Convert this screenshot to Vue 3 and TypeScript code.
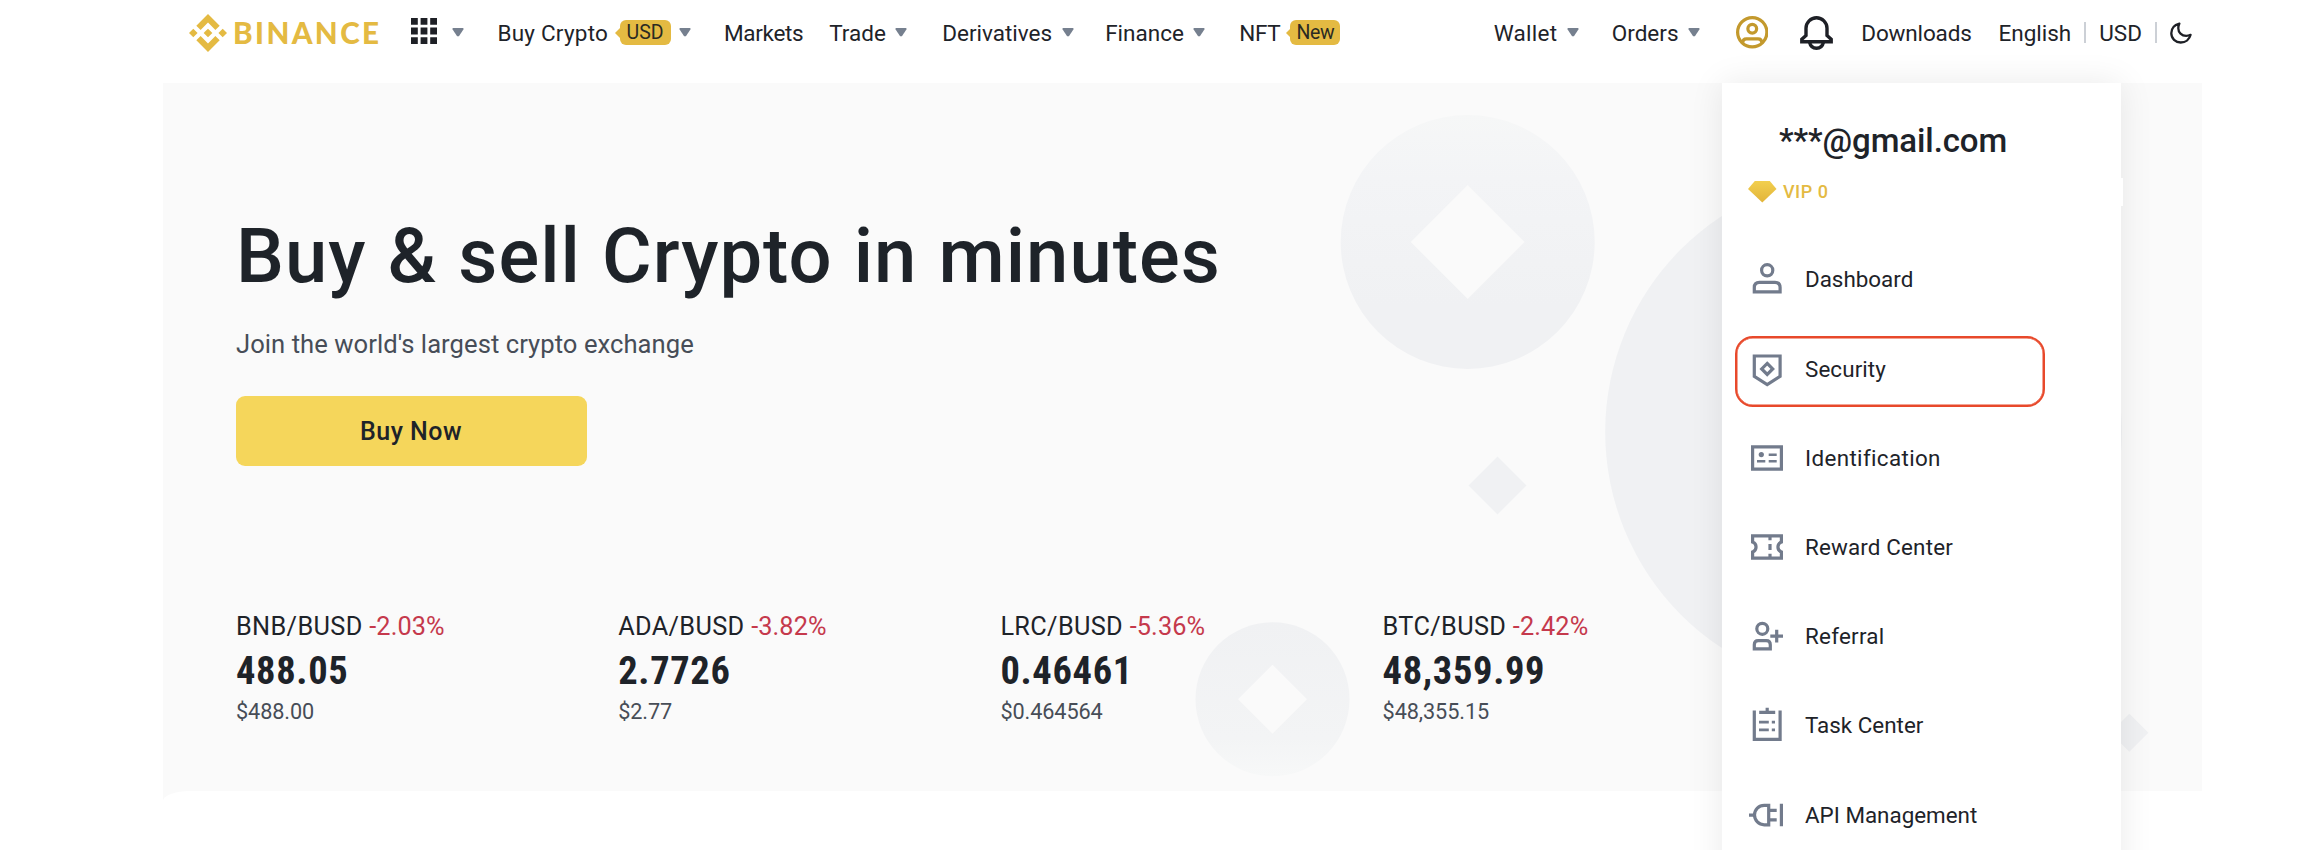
<script setup lang="ts">
interface NavItem {
  label: string
  slot: string
  tracking?: number
  badge?: string
  caret?: boolean
}

interface Ticker {
  pair: string
  change: string
  price: string
  usd: string
}

interface MenuItem {
  label: string
  icon: string
  tracking: number
  highlighted?: boolean
}

const mainNav: NavItem[] = [
  { label: 'Buy Crypto', slot: 'buy', tracking: 0.23, badge: 'USD', caret: true },
  { label: 'Markets', slot: 'markets', tracking: -0.3 },
  { label: 'Trade', slot: 'trade', tracking: 0, caret: true },
  { label: 'Derivatives', slot: 'derivatives', tracking: 0, caret: true },
  { label: 'Finance', slot: 'finance', tracking: 0, caret: true },
  { label: 'NFT', slot: 'nft', tracking: -0.3, badge: 'New' },
]

const accountNav: NavItem[] = [
  { label: 'Wallet', slot: 'wallet', tracking: 0.25, caret: true },
  { label: 'Orders', slot: 'orders', tracking: 0, caret: true },
]

const tickers: Ticker[] = [
  { pair: 'BNB/BUSD', change: '-2.03%', price: '488.05', usd: '$488.00' },
  { pair: 'ADA/BUSD', change: '-3.82%', price: '2.7726', usd: '$2.77' },
  { pair: 'LRC/BUSD', change: '-5.36%', price: '0.46461', usd: '$0.464564' },
  { pair: 'BTC/BUSD', change: '-2.42%', price: '48,359.99', usd: '$48,355.15' },
]

const menu: MenuItem[] = [
  { label: 'Dashboard', icon: 'user', tracking: 0 },
  { label: 'Security', icon: 'shield', tracking: 0.1, highlighted: true },
  { label: 'Identification', icon: 'id', tracking: 0.36 },
  { label: 'Reward Center', icon: 'ticket', tracking: 0.16 },
  { label: 'Referral', icon: 'referral', tracking: 0.25 },
  { label: 'Task Center', icon: 'task', tracking: 0 },
  { label: 'API Management', icon: 'api', tracking: 0 },
]
</script>

<template>
  <div class="page">
    <header class="header">
      <a class="logo">
        <svg class="logo-mark" viewBox="0 0 126.61 126.61">
          <path d="M38.73 53.2 63.31 28.62 87.9 53.21 102.2 38.91 63.31 0 24.43 38.9zM0 63.31 14.3 49.01 28.6 63.31 14.3 77.61zM38.73 73.41 63.31 98 87.9 73.4 102.21 87.69 63.31 126.61 24.43 87.73zM98.01 63.31 112.31 49.01 126.61 63.31 112.31 77.61zM77.83 63.3 63.31 48.78 52.58 59.51 51.34 60.74 48.79 63.29 63.31 77.82z" />
        </svg>
        <span class="logo-text">BINANCE</span>
      </a>
      <div class="apps">
        <svg class="apps-grid" viewBox="0 0 26 26">
          <path d="M0 0h6.8v6.8H0zM9.6 0h6.8v6.8H9.6zM19.2 0H26v6.8h-6.8zM0 9.6h6.8v6.8H0zM9.6 9.6h6.8v6.8H9.6zM19.2 9.6H26v6.8h-6.8zM0 19.2h6.8V26H0zM9.6 19.2h6.8V26H9.6zM19.2 19.2H26V26h-6.8z" />
        </svg>
        <svg class="caret" viewBox="0 0 12 9"><path d="M.6 0h10.8v1.6L6.9 8.2H5.1L.6 1.6z" /></svg>
      </div>
      <a v-for="item in mainNav" :key="item.label" class="nav-item" :class="item.slot">
        <span :style="{ letterSpacing: item.tracking + 'px' }">{{ item.label }}</span>
        <span v-if="item.badge" class="badge">{{ item.badge }}</span>
        <svg v-if="item.caret" class="caret" viewBox="0 0 12 9"><path d="M.6 0h10.8v1.6L6.9 8.2H5.1L.6 1.6z" /></svg>
      </a>
      <a v-for="item in accountNav" :key="item.label" class="nav-item" :class="item.slot">
        <span :style="{ letterSpacing: item.tracking + 'px' }">{{ item.label }}</span>
        <svg class="caret" viewBox="0 0 12 9"><path d="M.6 0h10.8v1.6L6.9 8.2H5.1L.6 1.6z" /></svg>
      </a>
      <div class="profile">
        <svg class="profile-icon" viewBox="0 0 32 32" fill="none" stroke="#c3992d" stroke-width="3.2">
          <circle cx="16" cy="16" r="14.4" />
          <circle cx="16" cy="12.6" r="4.3" />
          <path d="M6.6 26.4c0-2.6 1.4-4 3.7-4h11.4c2.3 0 3.7 1.4 3.7 4" />
        </svg>
      </div>
      <div class="alerts">
        <svg class="bell" viewBox="0 0 33 34" fill="none" stroke="#1e2026" stroke-width="3.4">
          <path d="M1.8 25.7v-2.4L6 19.4v-7.1a10.5 10.5 0 0 1 21 0v7.1l4.2 3.9v2.4z" />
          <path d="M9.6 26.4c.8 3.8 3.3 5.8 6.9 5.8s6.1-2 6.9-5.8" />
        </svg>
      </div>
      <a class="nav-item downloads">Downloads</a>
      <div class="locale">
        <span>English</span>
        <i class="divider"></i>
        <span>USD</span>
        <i class="divider"></i>
        <svg class="moon" viewBox="0 0 22 22" fill="none" stroke="#1e2026" stroke-width="2.3" stroke-linejoin="round">
          <path d="M9.4 1.6C4.5 2.9 1.3 6.6 1.3 11.3c0 5.2 4.2 9.2 9.4 9.2 5 0 8.8-3.2 9.9-7.7-1.5.7-2.9 1-4.4 1-4.6 0-7.9-3.3-7.9-7.6 0-1.6.4-3.2 1.1-4.6z" />
        </svg>
      </div>
    </header>

    <main class="hero">
      <svg class="backdrop" viewBox="0 0 2039 717">
        <defs>
          <linearGradient id="fade-up" x1="0" y1="0" x2="0" y2="1">
            <stop offset="0" stop-color="#f6f7f7" />
            <stop offset=".25" stop-color="#f3f4f6" />
            <stop offset=".75" stop-color="#f0f1f3" />
          </linearGradient>
          <linearGradient id="fade-down" x1="0" y1="0" x2="0" y2="1">
            <stop offset="0" stop-color="#f0f1f3" />
            <stop offset=".75" stop-color="#f3f4f5" />
            <stop offset="1" stop-color="#f7f8f8" />
          </linearGradient>
        </defs>
        <circle cx="1304.7" cy="159" r="127" fill="url(#fade-up)" />
        <path d="M1304.7 102l57 57-57 57-57-57z" fill="#fafafa" />
        <path d="M1334.5 373.5l29 29-29 29-29-29z" fill="#f0f1f3" />
        <circle cx="1700.5" cy="349" r="258.3" fill="#f0f1f3" />
        <circle cx="1109.5" cy="616.3" r="77" fill="url(#fade-down)" />
        <path d="M1109.5 581.8l34.5 34.5-34.5 34.5-34.5-34.5z" fill="#fafafa" />
        <path d="M1966.3 630.7l19 19-19 19-19-19z" fill="#f0f1f3" />
      </svg>
      <section class="intro">
        <h1>Buy &amp; sell Crypto in minutes</h1>
        <p>Join the world's largest crypto exchange</p>
        <button class="buy-now">Buy Now</button>
      </section>
      <section class="tickers">
        <article v-for="t in tickers" :key="t.pair" class="ticker">
          <div class="pair">{{ t.pair }} <span class="change">{{ t.change }}</span></div>
          <div class="price">{{ t.price }}</div>
          <div class="usd">{{ t.usd }}</div>
        </article>
      </section>
    </main>
    <section class="below"></section>

    <aside class="panel">
      <div class="email">***@gmail.com</div>
      <div class="vip">
        <svg class="gem" viewBox="0 0 29 22">
          <defs>
            <linearGradient id="gem-fill" x1="0" y1="0" x2="0" y2="1">
              <stop offset="0" stop-color="#f2cf4e" />
              <stop offset="1" stop-color="#e2b43a" />
            </linearGradient>
          </defs>
          <path d="M6.8 0h15l6.7 8L14.3 21.6 0 8z" fill="url(#gem-fill)" />
        </svg>
        <span>VIP 0</span>
      </div>
      <nav class="menu">
        <a v-for="item in menu" :key="item.label" class="menu-item" :class="{ highlighted: item.highlighted }">
          <svg class="menu-icon" viewBox="0 0 40 40" fill="none" stroke="#727b8c" stroke-width="3.2">
            <template v-if="item.icon === 'user'">
              <circle cx="20.2" cy="11.3" r="5.6" />
              <path d="M7.3 32.8v-4.4c0-3.2 1.9-5.1 5.1-5.1H28c3.2 0 5.1 1.9 5.1 5.1v4.4z" />
            </template>
            <template v-else-if="item.icon === 'shield'">
              <path d="M7.3 7h25.8v20.3l-12.9 8.2-12.9-8.2z" />
              <path d="M20.2 14.4l5.5 5.5-5.5 5.5-5.5-5.5z" />
            </template>
            <template v-else-if="item.icon === 'id'">
              <path d="M5.6 8.8h28.8v22.4H5.6z" />
              <circle cx="14.3" cy="16.6" r="2.6" fill="#727b8c" stroke="none" />
              <path d="M21.7 16.7h8M10 23.3h8.3M21.7 23.3h8" stroke-width="2.6" />
            </template>
            <template v-else-if="item.icon === 'ticket'">
              <path d="M5.6 8.9h28.8v6.2a5.2 5.2 0 0 0 0 9.8v6.2H5.6v-6.2a5.2 5.2 0 0 0 0-9.8z" />
              <path d="M23 9.5v3.8M23 17v6M23 26.7v3.8" />
            </template>
            <template v-else-if="item.icon === 'referral'">
              <circle cx="15.3" cy="12.8" r="5.5" />
              <path d="M7.3 32.9v-4.2c0-2.6 1.6-4 4-4h8c2.4 0 4 1.4 4 4v4.2zM23.3 20.1H36M29.7 13.8v12.7" />
            </template>
            <template v-else-if="item.icon === 'task'">
              <path d="M7.3 5.6v28.7h25.8V5.6" />
              <path d="M12.2 7.3h16M20.2 2.8V7" />
              <path d="M12 17.1h9.8M24.8 17.1H28M12 24.9h9.8M24.8 24.9H28" stroke-width="2.8" />
            </template>
            <template v-else>
              <path d="M21.7 10.4h-4.5a9.7 9.7 0 0 0 0 19.4h4.5z" />
              <path d="M2 20.1h5.5M23 15.4h6.7M23 24.8h6.7M34.4 8.8v22.4" />
            </template>
          </svg>
          <span :style="{ letterSpacing: item.tracking + 'px' }">{{ item.label }}</span>
        </a>
      </nav>
    </aside>
  </div>
</template>

<style scoped>
.page {
  position: relative;
  width: 2324px;
  height: 850px;
  overflow: hidden;
  background: #fff;
  color: #1e2329;
  font-family: Roboto, 'Noto Sans', sans-serif;
}

.header {
  display: grid;
  grid-template-columns: 222.4px 86px 226.5px 105.3px 113px 163px 134px 253.5px 119.1px 123.8px 64.2px 61.5px 137.2px auto;
  align-items: center;
  height: 65px;
  padding-left: 189px;
  margin-bottom: 18px;
  font-size: 22.5px;
  white-space: nowrap;
}

.logo {
  display: flex;
  align-items: center;
  color: #e4ba42;
}

.logo-mark {
  width: 38px;
  height: 38px;
  fill: currentColor;
}

.logo-text {
  margin-left: 6px;
  font-family: Lato, sans-serif;
  font-size: 29.6px;
  font-weight: 900;
  line-height: 38px;
  letter-spacing: 2.4px;
}

.apps {
  display: flex;
  align-items: center;
  gap: 15px;
}

.apps-grid {
  width: 26px;
  height: 26px;
  margin-top: -3px;
  fill: #1e2026;
}

.caret {
  flex: none;
  width: 12px;
  height: 9px;
  fill: #76808f;
}

.nav-item {
  display: flex;
  align-items: center;
  gap: 9.5px;
}

.badge {
  position: relative;
  height: 25px;
  margin-left: 2px;
  padding: 0 7px;
  border-radius: 6px;
  background: #e4ba42;
  color: #2b2a22;
  font-size: 19.5px;
  line-height: 25px;
}

.buy .badge {
  margin-right: -1px;
}

.nft .badge {
  margin-left: 0.5px;
  padding: 0 6px;
  letter-spacing: -0.3px;
}

.badge::before {
  content: '';
  position: absolute;
  top: 8px;
  left: -4.5px;
  border: solid transparent;
  border-width: 5px 5px 5px 0;
  border-right-color: #e4ba42;
}

.wallet {
  margin-left: 1px;
}

.profile,
.alerts {
  display: flex;
}

.profile-icon {
  width: 32.5px;
  height: 32.5px;
}

.bell {
  width: 33px;
  height: 34px;
}

.downloads {
  letter-spacing: -0.15px;
}

.locale {
  display: flex;
  align-items: center;
}

.divider {
  width: 2px;
  height: 21px;
  margin: 0 13px;
  background: #ccd0d6;
}

.moon {
  width: 22px;
  height: 22px;
}

.hero {
  position: relative;
  box-sizing: border-box;
  width: 2039px;
  height: 717px;
  margin-left: 163px;
  padding: 128px 0 0 73px;
  background: #fafafa;
}

.backdrop {
  position: absolute;
  inset: 0;
  width: 2039px;
  height: 717px;
}

.intro,
.tickers {
  position: relative;
}

h1 {
  margin: 0;
  font-size: 76px;
  font-weight: 500;
  line-height: 90px;
  letter-spacing: 1px;
  word-spacing: 1.2px;
}

.intro p {
  margin: 25px 0 34px;
  color: #474d57;
  font-size: 25.6px;
  line-height: 36px;
  letter-spacing: 0.05px;
}

.buy-now {
  display: block;
  width: 351px;
  height: 70px;
  padding: 1px 1px 0 0;
  border: 0;
  border-radius: 9px;
  background: #f5d65b;
  color: #1e2329;
  font: 500 25px/69px Roboto, sans-serif;
  letter-spacing: 0.5px;
}

.tickers {
  display: grid;
  grid-template-columns: repeat(4, 382.2px);
  margin-top: 143px;
}

.pair {
  font-size: 25.3px;
  line-height: 36px;
  letter-spacing: 0.35px;
}

.change {
  color: #c5394c;
  letter-spacing: 0.1px;
}

.price {
  margin-top: 4px;
  font-family: 'Roboto Condensed', Roboto, sans-serif;
  font-size: 38.5px;
  font-weight: 700;
  line-height: 44px;
  letter-spacing: 0.65px;
}

.usd {
  margin-top: 4px;
  color: #474d57;
  font-size: 21.7px;
  line-height: 30px;
  letter-spacing: -0.1px;
}

.below {
  position: relative;
  height: 60px;
  margin: -9.5px 0 0 163px;
  border-top-left-radius: 27px 10px;
  background: #fff;
}

.panel {
  position: absolute;
  top: 83px;
  left: 1722px;
  box-sizing: border-box;
  width: 399px;
  height: 820px;
  padding: 36px 0 0 25px;
  background: #fff;
  box-shadow: 0 0 32px rgba(20, 21, 26, 0.085);
}

.email {
  margin-left: 32px;
  font-size: 33px;
  font-weight: 500;
  line-height: 44px;
  letter-spacing: -0.1px;
}

.vip {
  display: flex;
  align-items: center;
  gap: 6px;
  width: 376px;
  height: 28px;
  margin-top: 14.5px;
  background: #fff;
  color: #e4ba42;
  font-size: 18px;
  font-weight: 500;
  letter-spacing: 0.5px;
}

.gem {
  width: 29px;
  height: 22px;
  margin-left: 1px;
}

.menu {
  margin-top: 29.3px;
}

.menu-item {
  position: relative;
  display: flex;
  align-items: center;
  gap: 18px;
  height: 89.2px;
  font-size: 22.4px;
}

.highlighted::after {
  content: '';
  position: absolute;
  top: 12px;
  left: -12.3px;
  box-sizing: border-box;
  width: 310px;
  height: 70.7px;
  border: 2px solid #e8492b;
  border-radius: 18px;
  box-shadow: inset 0 0 0 0.5px #e8492b;
}

.menu-icon {
  flex: none;
  width: 40px;
  height: 40px;
}
</style>

<style>
body {
  overflow: hidden;
  background: #fff;
}
</style>
